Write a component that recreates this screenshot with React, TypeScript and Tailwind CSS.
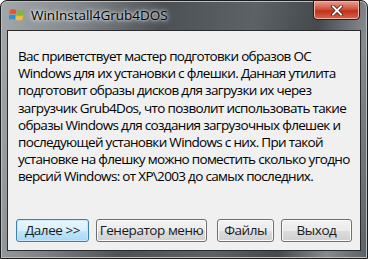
import React from 'react';

const font = { fontFamily: '"Open Sans", "Noto Sans", "DejaVu Sans", sans-serif' };

const lines = [
	'Вас приветствует мастер подготовки образов ОС',
	'Windows для их установки с флешки. Данная утилита',
	'подготовит образы дисков для загрузки их через',
	'загрузчик Grub4Dos, что позволит использовать такие',
	'образы Windows для создания загрузочных флешек и',
	'последующей установки Windows с них. При такой',
	'установке на флешку можно поместить сколько угодно',
	'версий Windows: от XP\\2003 до самых последних.',
];

function WinFlag() {
	return (
		<svg width="16" height="16" viewBox="0 0 16 16">
			<path d="M1 3 C3 2 5 2 7.3 3 L6.6 7.2 C4.5 6.3 2.6 6.3 0.4 7.2 Z" fill="#e8502e" />
			<path d="M8.3 3.3 C10.5 4.2 12.6 4.2 15 3.3 L14.3 7.5 C12 8.3 10 8.3 7.6 7.5 Z" fill="#7cbd2c" />
			<path d="M0.2 8.3 C2.4 7.4 4.4 7.4 6.5 8.3 L5.8 12.6 C3.6 11.7 1.6 11.7 -0.4 12.6 Z" fill="#2d8fe0" />
			<path d="M7.4 8.6 C9.7 9.5 11.8 9.5 14.1 8.6 L13.4 12.8 C11.1 13.7 9.1 13.7 6.8 12.8 Z" fill="#f6c131" />
		</svg>
	);
}

function Btn({ label, width, primary }: { label: string; width: string; primary?: boolean }) {
	return (
		<button
			className={
				primary
					? `${width} h-[23px] whitespace-nowrap rounded-[3px] border border-[#3c7fb1] bg-[linear-gradient(#eaf6fd_0%,#d9f0fc_50%,#bee6fd_51%,#a7d9f5_100%)] text-[13.5px] tracking-[-0.45px] text-[#1a1a1a] shadow-[inset_0_0_0_1px_#c8e8fb]`
					: `${width} h-[23px] whitespace-nowrap rounded-[3px] border border-[#707070] bg-[linear-gradient(#f2f2f2_0%,#ebebeb_50%,#dddddd_51%,#cfcfcf_100%)] text-[13.5px] tracking-[-0.45px] text-[#1a1a1a] shadow-[inset_0_0_0_1px_#fbfbfb]`
			}
			style={font}
		>
			{label}
		</button>
	);
}

export default function App() {
	return (
		<div className="h-[259px] w-[368px] overflow-hidden bg-white">
			<div className="relative flex h-[259px] w-[368px] flex-col rounded-t-[7px] border border-[#1c1c1c] bg-[linear-gradient(100deg,#a3a8ac_0%,#858a8f_18%,#4c5156_40%,#5d6267_62%,#44494e_78%,#868b90_90%,#5a5f64_100%)] shadow-[inset_0_0_0_1px_#b9bec2]">
				<div className="flex h-[28px] items-center gap-[6px] pl-[8px]">
					<WinFlag />
					<span className="text-[13.5px] text-black [text-shadow:0_0_6px_#ffffff,0_0_3px_#ffffff]" style={font}>
						WinInstall4Grub4DOS
					</span>
				</div>
				<div className="absolute right-[7px] top-[-1px] flex h-[20px] w-[47px] items-center justify-center rounded-b-[4px] border border-[#3a1410] bg-[linear-gradient(#e8a093_0%,#d0533f_45%,#c1301a_55%,#d6674d_100%)] shadow-[inset_0_0_0_1px_#f3b7aa]">
					<svg width="12" height="11" viewBox="0 0 12 11">
						<path d="M2 1.5 L10 9.5 M10 1.5 L2 9.5" stroke="#3b0f08" strokeWidth="3.4" strokeLinecap="square" />
						<path d="M2 1.5 L10 9.5 M10 1.5 L2 9.5" stroke="#ffffff" strokeWidth="2" strokeLinecap="square" />
					</svg>
				</div>
				<div className="mx-[6px] mt-[1px] flex h-[221px] flex-col border border-[#2a2a2a] bg-[#f0f0f0]">
					<div className="px-[10px] pt-[17px] text-[13.5px] leading-[17.2px] tracking-[-0.68px] text-black" style={font}>
						{lines.map((line) => (
							<div key={line} className="whitespace-nowrap">
								{line}
							</div>
						))}
					</div>
					<div className="mt-auto mb-[8px] flex items-center pl-[8px]">
						<Btn label="Далее >>" width="w-[73px]" primary />
						<div className="w-[7px]" />
						<Btn label="Генератор меню" width="w-[111px]" />
						<div className="w-[10px]" />
						<Btn label="Файлы" width="w-[57px]" />
						<div className="w-[7px]" />
						<Btn label="Выход" width="w-[71px]" />
					</div>
				</div>
			</div>
		</div>
	);
}
